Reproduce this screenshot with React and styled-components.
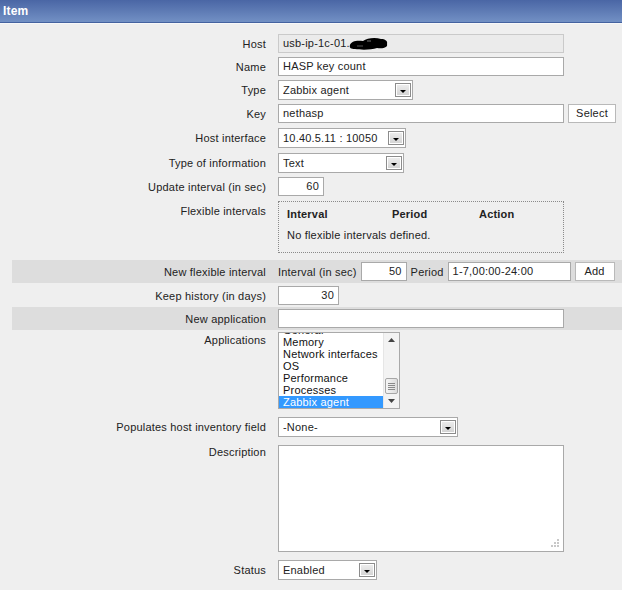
import React from 'react';
import styled, { createGlobalStyle } from 'styled-components';

const GlobalStyle = createGlobalStyle`
  html, body {
    margin: 0;
    padding: 0;
    background: #efefef;
  }
  body {
    font-family: "Liberation Sans", Arial, sans-serif;
    font-size: 11px;
    letter-spacing: 0.2px;
    color: #222;
  }
`;

const Page = styled.div`
  width: 622px;
  height: 590px;
  overflow: hidden;
  background: #efefef;
`;

const Header = styled.div`
  height: 22px;
  line-height: 22px;
  padding-left: 3px;
  color: #fff;
  font-weight: bold;
  font-size: 12px;
  background: linear-gradient(#4a66a5, #7290c4);
  border-bottom: 1px solid #4462a0;
  box-shadow: 0 1px 0 #f8f8f8;
`;

const Form = styled.div`
  padding-top: 9px;
  display: flex;
  flex-direction: column;
`;

const Row = styled.div`
  display: grid;
  grid-template-columns: 254px 1fr;
  column-gap: 12px;
  align-items: ${p => (p.$top ? 'start' : 'center')};
  margin-left: 12px;
  margin-top: ${p => p.$gap || 0}px;
  padding: 2px 0;
  background: ${p => (p.$band ? '#dddddd' : 'transparent')};
`;

const Label = styled.div`
  text-align: right;
  color: #222;
  white-space: nowrap;
  padding-top: ${p => p.$pt || 0}px;
`;

const Controls = styled.div`
  display: flex;
  align-items: center;
  gap: 4px;
`;

const Input = styled.div`
  box-sizing: border-box;
  width: ${p => p.$w}px;
  height: 19px;
  line-height: 17px;
  border: 1px solid ${p => (p.$disabled ? '#cacaca' : '#a9a9a9')};
  background: ${p => (p.$disabled ? '#ebebeb' : '#fff')};
  padding: 0 4px;
  color: #222;
  white-space: nowrap;
  overflow: hidden;
  display: flex;
  align-items: center;
  justify-content: ${p => (p.$right ? 'flex-end' : 'flex-start')};
`;

const Button = styled.div`
  box-sizing: border-box;
  width: ${p => p.$w}px;
  height: 19px;
  line-height: 17px;
  border: 1px solid #b9b9b9;
  background: #fff;
  text-align: center;
  color: #222;
`;

const SelectBox = styled.div`
  box-sizing: border-box;
  width: ${p => p.$w}px;
  height: 20px;
  border: 1px solid #a9a9a9;
  background: #fff;
  display: flex;
  align-items: center;
  padding-left: 4px;
  white-space: nowrap;
`;

const SelectText = styled.span`
  flex: 1;
  overflow: hidden;
`;

const ArrowBox = styled.span`
  box-sizing: border-box;
  width: 16px;
  height: 14px;
  margin-right: 1px;
  border: 1px solid #8c8c8c;
  box-shadow: inset 0 0 0 1px #fff;
  background: linear-gradient(#eeeeee, #d2d2d2);
  display: flex;
  align-items: flex-end;
  justify-content: center;
  padding-bottom: 3px;

  &::after {
    content: '';
    border-left: 3px solid transparent;
    border-right: 3px solid transparent;
    border-top: 3px solid #000;
  }
`;

const Select = ({ w, children }) => (
  <SelectBox $w={w}>
    <SelectText>{children}</SelectText>
    <ArrowBox />
  </SelectBox>
);

const FlexBox = styled.div`
  box-sizing: border-box;
  width: 286px;
  height: 52px;
  border: 1px dotted #8a8a8a;
  padding: 5px 8px 0 8px;
`;

const FlexHead = styled.div`
  display: grid;
  grid-template-columns: 105px 87px auto;
  font-weight: bold;
  line-height: 14px;
`;

const FlexEmpty = styled.div`
  margin-top: 7px;
  line-height: 14px;
`;

const Text = styled.span`
  white-space: nowrap;
`;

const ListBox = styled.div`
  box-sizing: border-box;
  width: 122px;
  height: 77px;
  border: 1px solid #a9a9a9;
  background: #fff;
  display: flex;
  overflow: hidden;
`;

const ListItems = styled.div`
  flex: 1;
  margin-top: -9px;
`;

const ListItem = styled.div`
  height: 12px;
  line-height: 12px;
  padding-left: 4px;
  white-space: nowrap;
  background: ${p => (p.$selected ? '#3399ff' : 'transparent')};
  color: ${p => (p.$selected ? '#fff' : '#111')};
`;

const Scrollbar = styled.div`
  width: 15px;
  background: #f3f3f3;
  border-left: 1px solid #e6e6e6;
  display: flex;
  flex-direction: column;
`;

const ScrollArrow = styled.div`
  height: 14px;
  display: flex;
  align-items: center;
  justify-content: center;
`;

const Track = styled.div`
  flex: 1;
  padding-top: 31px;
`;

const Thumb = styled.div`
  box-sizing: border-box;
  height: 16px;
  margin: 0 1px;
  border: 1px solid #a6a6a6;
  border-radius: 2px;
  background: linear-gradient(90deg, #f6f6f6, #dcdcdc);
  display: flex;
  align-items: center;
  justify-content: center;
`;

const TextArea = styled.div`
  position: relative;
  box-sizing: border-box;
  width: 286px;
  height: 107px;
  border: 1px solid #a9a9a9;
  background: #fff;
`;

const Grip = styled.svg`
  position: absolute;
  right: 3px;
  bottom: 3px;
`;

const Redacted = () => (
  <svg width="40" height="14" viewBox="0 0 40 14" style={{ marginLeft: -1 }}>
    <path d="M1 8 C2 4 8 3 14 4 C18 1 26 0 32 2 C36 2 39 4 38 7 C39 10 35 12 28 11 C22 13 12 13 6 12 C2 12 0 11 1 8 Z" fill="#000" />
    <path d="M18 4 L22 4" stroke="#777" strokeWidth="1" />
    <path d="M8 9 L14 9" stroke="#555" strokeWidth="1" />
  </svg>
);

const TriUp = () => (
  <svg width="7" height="4" viewBox="0 0 7 4"><path d="M0 4 L3.5 0 L7 4 Z" fill="#444" /></svg>
);

const TriDown = () => (
  <svg width="7" height="4" viewBox="0 0 7 4"><path d="M0 0 L3.5 4 L7 0 Z" fill="#444" /></svg>
);

const apps = ['General', 'Memory', 'Network interfaces', 'OS', 'Performance', 'Processes', 'Zabbix agent'];

export default function App() {
  return (
    <Page>
      <GlobalStyle />
      <Header>Item</Header>
      <Form>
        <Row>
          <Label>Host</Label>
          <Controls>
            <Input $w={286} $disabled>usb-ip-1c-01.<Redacted /></Input>
          </Controls>
        </Row>
        <Row>
          <Label>Name</Label>
          <Controls><Input $w={286}>HASP key count</Input></Controls>
        </Row>
        <Row>
          <Label>Type</Label>
          <Controls><Select w={135}>Zabbix agent</Select></Controls>
        </Row>
        <Row>
          <Label>Key</Label>
          <Controls>
            <Input $w={286}>nethasp</Input>
            <Button $w={48}>Select</Button>
          </Controls>
        </Row>
        <Row $gap={1}>
          <Label>Host interface</Label>
          <Controls><Select w={128}>10.40.5.11 : 10050</Select></Controls>
        </Row>
        <Row $gap={1}>
          <Label>Type of information</Label>
          <Controls><Select w={126}>Text</Select></Controls>
        </Row>
        <Row>
          <Label>Update interval (in sec)</Label>
          <Controls><Input $w={46} $right>60</Input></Controls>
        </Row>
        <Row $gap={1} $top>
          <Label $pt={4}>Flexible intervals</Label>
          <FlexBox>
            <FlexHead>
              <span>Interval</span>
              <span>Period</span>
              <span>Action</span>
            </FlexHead>
            <FlexEmpty>No flexible intervals defined.</FlexEmpty>
          </FlexBox>
        </Row>
        <Row $gap={5} $band>
          <Label>New flexible interval</Label>
          <Controls>
            <Text>Interval (in sec)</Text>
            <Input $w={46} $right>50</Input>
            <Text>Period</Text>
            <Input $w={123}>1-7,00:00-24:00</Input>
            <Button $w={40}>Add</Button>
          </Controls>
        </Row>
        <Row $gap={1}>
          <Label>Keep history (in days)</Label>
          <Controls><Input $w={61} $right>30</Input></Controls>
        </Row>
        <Row $band>
          <Label>New application</Label>
          <Controls><Input $w={286} /></Controls>
        </Row>
        <Row $top>
          <Label $pt={2}>Applications</Label>
          <ListBox>
            <ListItems>
              {apps.map(a => (
                <ListItem key={a} $selected={a === 'Zabbix agent'}>{a}</ListItem>
              ))}
            </ListItems>
            <Scrollbar>
              <ScrollArrow><TriUp /></ScrollArrow>
              <Track>
                <Thumb>
                  <svg width="7" height="8" viewBox="0 0 7 8">
                    <path d="M0 1.5 H7 M0 3.5 H7 M0 5.5 H7 M0 7.5 H7" stroke="#8a8a8a" strokeWidth="1" />
                  </svg>
                </Thumb>
              </Track>
              <ScrollArrow><TriDown /></ScrollArrow>
            </Scrollbar>
          </ListBox>
        </Row>
        <Row $gap={4}>
          <Label>Populates host inventory field</Label>
          <Controls><Select w={180}>-None-</Select></Controls>
        </Row>
        <Row $gap={4} $top>
          <Label $pt={1}>Description</Label>
          <TextArea>
            <Grip width="9" height="9" viewBox="0 0 9 9">
              <rect x="6" y="0" width="2" height="2" fill="#c8c8c8" />
              <rect x="3" y="3" width="2" height="2" fill="#c8c8c8" />
              <rect x="6" y="3" width="2" height="2" fill="#c8c8c8" />
              <rect x="0" y="6" width="2" height="2" fill="#c8c8c8" />
              <rect x="3" y="6" width="2" height="2" fill="#c8c8c8" />
              <rect x="6" y="6" width="2" height="2" fill="#c8c8c8" />
            </Grip>
          </TextArea>
        </Row>
        <Row $gap={4}>
          <Label>Status</Label>
          <Controls><Select w={99}>Enabled</Select></Controls>
        </Row>
      </Form>
    </Page>
  );
}
